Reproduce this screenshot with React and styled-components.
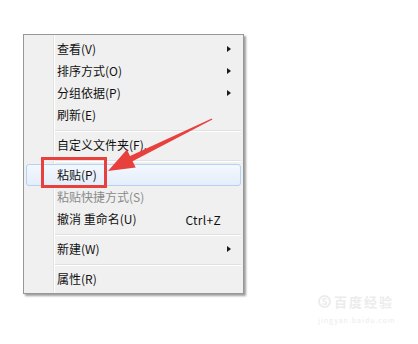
import React from "react";
import styled, { createGlobalStyle, css } from "styled-components";

const Global = createGlobalStyle`
  html, body { margin: 0; padding: 0; background: #ffffff; }
  body { font-family: "Noto Sans CJK SC", "Noto Sans", sans-serif; }
`;

const Page = styled.div`
  position: relative;
  width: 418px;
  height: 344px;
  padding: 34px 0 0 23px;
  box-sizing: border-box;
  overflow: hidden;
`;

const Menu = styled.div`
  width: 221px;
  box-sizing: border-box;
  padding: 3px 2px;
  border: 1px solid #979797;
  background: linear-gradient(
    to right,
    #f0f0f0 0 29px,
    #e2e3e3 29px 30px,
    #ffffff 30px 31px,
    #f0f0f0 31px
  );
  box-shadow: 2px 2px 2px rgba(0, 0, 0, 0.38);
  font-size: 12px;
`;

const Item = styled.div`
  display: flex;
  align-items: center;
  height: 22px;
  box-sizing: border-box;
  padding: 0 9px 0 30px;
  border: 1px solid transparent;
  border-radius: 3px;
  color: ${(p) => (p.$disabled ? "#8a8a8a" : "#111111")};
  white-space: nowrap;
  ${(p) =>
    p.$active &&
    css`
      border-color: #b3d2f6;
      background: linear-gradient(#f3f8fe, #e4edfa);
    `}
`;

const Label = styled.span`
  flex: 1;
  line-height: 22px;
`;

const Shortcut = styled.span`
  margin-right: 10px;
  letter-spacing: 0.3px;
`;

const SubArrow = styled.span`
  width: 0;
  height: 0;
  margin-right: 0;
  border-top: 3.5px solid transparent;
  border-bottom: 3.5px solid transparent;
  border-left: 4px solid #1a1a1a;
`;

const Separator = styled.div`
  height: 8px;
  display: flex;
  align-items: center;
  padding-left: 29px;
  &::after {
    content: "";
    flex: 1;
    height: 1px;
    background: #e0e0e0;
    box-shadow: 0 1px 0 #ffffff;
  }
`;

const RedBox = styled.div`
  position: absolute;
  left: 41px;
  top: 157px;
  width: 66px;
  height: 31px;
  box-sizing: border-box;
  border: 3px solid #e8403d;
`;

const Overlay = styled.svg`
  position: absolute;
  left: 0;
  top: 0;
  pointer-events: none;
`;

const Watermark = styled.div`
  position: absolute;
  left: 318px;
  top: 292px;
  display: flex;
  flex-direction: column;
  gap: 4px;
  color: #ececec;
`;

const WmTop = styled.div`
  display: flex;
  align-items: center;
  gap: 3px;
  font-size: 13px;
  font-weight: bold;
  letter-spacing: 2px;
`;

const WmLogo = styled.span`
  width: 13px;
  height: 13px;
  border-radius: 50%;
  border: 2px solid #ececec;
  box-sizing: border-box;
  font-size: 9px;
  line-height: 9px;
  text-align: center;
  letter-spacing: 0;
`;

const WmBottom = styled.div`
  font-size: 7px;
  letter-spacing: 1px;
`;

const items = [
  { label: "查看(V)", sub: true },
  { label: "排序方式(O)", sub: true },
  { label: "分组依据(P)", sub: true },
  { label: "刷新(E)" },
  { sep: true },
  { label: "自定义文件夹(F)..." },
  { sep: true },
  { label: "粘贴(P)", active: true },
  { label: "粘贴快捷方式(S)", disabled: true },
  { label: "撤消 重命名(U)", shortcut: "Ctrl+Z" },
  { sep: true },
  { label: "新建(W)", sub: true },
  { sep: true },
  { label: "属性(R)" },
];

export default function App() {
  return (
    <>
      <Global />
      <Page>
        <Menu>
          {items.map((it, i) =>
            it.sep ? (
              <Separator key={i} />
            ) : (
              <Item key={i} $active={it.active} $disabled={it.disabled}>
                <Label>{it.label}</Label>
                {it.shortcut && <Shortcut>{it.shortcut}</Shortcut>}
                {it.sub && <SubArrow />}
              </Item>
            )
          )}
        </Menu>
        <RedBox />
        <Overlay width="418" height="344" viewBox="0 0 418 344">
          <polygon
            fill="#e8403d"
            points="108,171 126.9,149.6 130.0,155.9 211.8,118.6 212.4,119.6 132.6,161.3 135.7,167.6"
          />
        </Overlay>
        <Watermark>
          <WmTop>
            <WmLogo>S</WmLogo>
            <span>百度经验</span>
          </WmTop>
          <WmBottom>jingyan.baidu.com</WmBottom>
        </Watermark>
      </Page>
    </>
  );
}
